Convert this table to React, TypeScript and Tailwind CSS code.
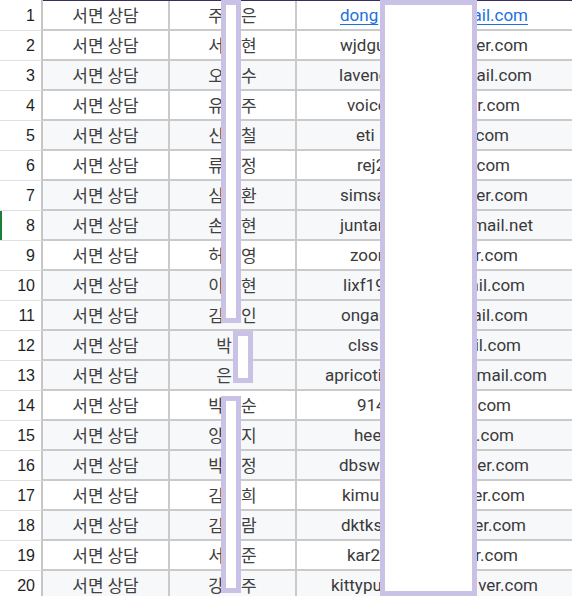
const rows = [
  { name: ["주", "은"], left: "dong", leftX: 340, right: "ail.com", rightX: 528, link: true },
  { name: ["서", "현"], left: "wjdgu", leftX: 340, right: "er.com", rightX: 528 },
  { name: ["오", "수"], left: "lavend", leftX: 339, right: "ail.com", rightX: 532 },
  { name: ["유", "주"], left: "voice", leftX: 347, right: "r.com", rightX: 520 },
  { name: ["신", "철"], left: "eti", leftX: 356, right: "com", rightX: 509 },
  { name: ["류", "정"], left: "rej2", leftX: 357, right: "com", rightX: 510 },
  { name: ["심", "환"], left: "simsa", leftX: 340, right: "er.com", rightX: 528 },
  { name: ["손", "현"], left: "juntar", leftX: 340, right: "mail.net", rightX: 533 },
  { name: ["허", "영"], left: "zoon", leftX: 350, right: "r.com", rightX: 518 },
  { name: ["이", "현"], left: "lixf19", leftX: 343, right: "ail.com", rightX: 525 },
  { name: ["김", "인"], left: "ongar", leftX: 341, right: "ail.com", rightX: 528 },
  { name: ["박"], left: "clss", leftX: 348, right: "il.com", rightX: 521 },
  { name: ["은"], left: "apricoti", leftX: 325, right: "mail.com", rightX: 547 },
  { name: ["박", "순"], left: "914", leftX: 357, right: "ver.com", rightX: 511 },
  { name: ["양", "지"], left: "hee", leftX: 354, right: ".com", rightX: 514 },
  { name: ["박", "정"], left: "dbsw", leftX: 339, right: "er.com", rightX: 529 },
  { name: ["김", "희"], left: "kimu", leftX: 342, right: "er.com", rightX: 525 },
  { name: ["김", "람"], left: "dktks", leftX: 341, right: "er.com", rightX: 526 },
  { name: ["서", "준"], left: "kar2", leftX: 347, right: "r.com", rightX: 518 },
  { name: ["강", "주"], left: "kittypu", leftX: 331, right: "ver.com", rightX: 538 },
];

// rows with the light band fill
const banded = [3, 5, 7, 8, 10, 11, 12, 13, 15, 16, 18, 20];

const kr = { fontFamily: '"Noto Sans CJK KR", "Noto Sans", sans-serif' };

export default function App() {
  return (
    <div className="relative w-[572px] h-[596px] overflow-hidden bg-white text-[#3a3a3a]">
      {rows.map((r, i) => {
        const n = i + 1;
        const bg = banded.includes(n) ? "bg-[#f7f8fa]" : "bg-white";
        const first = i === 0;
        const link = r.link ? "text-[#1a71de] underline underline-offset-[3px]" : "";
        return (
          <div key={n} className={`flex ${first ? "h-[31px]" : "h-[30px]"}`}>
            <div
              className={`relative w-[43px] shrink-0 flex items-center justify-end pr-[6px] border-r-2 border-r-[#c6c6c6] border-b border-b-[#e0e0e0] bg-white text-[16px] text-[#1f1f1f] ${first ? "pt-px" : ""}`}
              style={{ fontFamily: '"Liberation Sans", Arial, sans-serif' }}
            >
              {n === 8 && <div className="absolute left-0 top-0 bottom-0 w-[2px] bg-[#188038]" />}
              {n}
            </div>
            <div className={`flex flex-1 ${bg} border-b-2 border-b-[#cacaca] ${first ? "border-t border-t-[#3b2d5c]" : ""}`}>
              <div
                className="w-[127px] shrink-0 flex items-center justify-center border-r-2 border-r-[#cacaca] text-[17px] text-[#404040]"
                style={kr}
              >
                서면 상담
              </div>
              <div
                className="w-[127px] shrink-0 flex items-center justify-center border-r-2 border-r-[#cacaca] text-[17px] text-[#404040]"
                style={kr}
              >
                <span>{r.name[0]}</span>
                <span className="w-[17px]" />
                {r.name[1] && <span>{r.name[1]}</span>}
              </div>
              <div
                className="relative flex-1 flex items-center pt-[2px] text-[17px]"
                style={{ fontFamily: "Roboto, sans-serif" }}
              >
                <span className={`absolute ${link}`} style={{ left: r.leftX - 297 }}>{r.left}</span>
                <span className={`absolute ${link}`} style={{ right: 572 - r.rightX }}>{r.right}</span>
              </div>
            </div>
          </div>
        );
      })}

      {/* redaction boxes */}
      <div className="absolute left-[221px] top-0 w-[20px] h-[323px] border-[5px] border-[#c9c1e6] bg-white" />
      <div className="absolute left-[233px] top-[331px] w-[20px] h-[52px] border-[5px] border-[#c9c1e6] bg-white" />
      <div className="absolute left-[221px] top-[396px] w-[20px] h-[197px] border-[5px] border-[#c9c1e6] bg-white" />
      <div className="absolute left-[380px] top-0 w-[97px] h-[596px] border-[5px] border-[#c9c1e6] bg-white" />
    </div>
  );
}
